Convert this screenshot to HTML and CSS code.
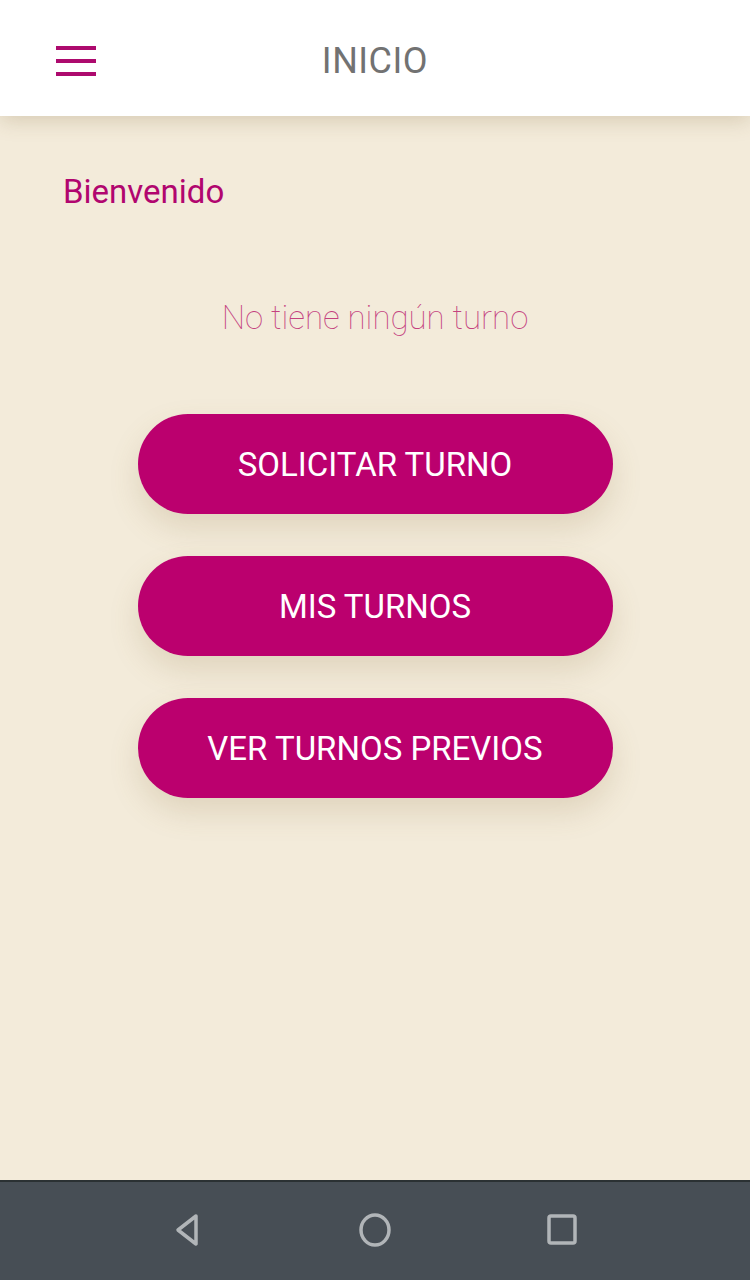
FILE: index.html
```html
<!DOCTYPE html>
<html lang="es">
<head>
    <meta charset="UTF-8">
    <meta name="viewport" content="width=device-width, initial-scale=1.0">
    <title>Inicio</title>
    <link rel="stylesheet" href="styles.css">
</head>
<body>
    <div class="screen">
        <header class="topbar">
            <button class="menu-btn" type="button" aria-label="Menu">
                <span></span><span></span><span></span>
            </button>
            <h1 class="title">INICIO</h1>
        </header>

        <main class="content">
            <p class="welcome">Bienvenido</p>
            <p class="empty">No tiene ningún turno</p>

            <div class="actions">
                <button class="pill" type="button">SOLICITAR TURNO</button>
                <button class="pill" type="button">MIS TURNOS</button>
                <button class="pill" type="button">VER TURNOS PREVIOS</button>
            </div>
        </main>

        <nav class="navbar">
            <svg class="nav-icon" width="40" height="40" viewBox="0 0 40 40">
                <path d="M28 5 L10 19 L28 33 Z" fill="none" stroke="#b1b5b8" stroke-width="3.5" stroke-linejoin="round"/>
            </svg>
            <svg class="nav-icon" width="40" height="40" viewBox="0 0 40 40">
                <ellipse cx="20" cy="19" rx="14" ry="15" fill="none" stroke="#b1b5b8" stroke-width="3.5"/>
            </svg>
            <svg class="nav-icon" width="40" height="40" viewBox="0 0 40 40">
                <rect x="7" y="5" width="26" height="27" rx="2" fill="none" stroke="#b1b5b8" stroke-width="3.5"/>
            </svg>
        </nav>
    </div>
</body>
</html>
```

FILE: styles.css
```css
html, body {
    margin: 0;
    padding: 0;
}
body {
    font-family: Roboto, "Liberation Sans", sans-serif;
    background-color: #f3ebda;
}
.screen {
    width: 750px;
    height: 1280px;
    display: flex;
    flex-direction: column;
    overflow: hidden;
}
.topbar {
    position: relative;
    z-index: 2;
    height: 116px;
    flex-shrink: 0;
    background: #fff;
    display: flex;
    align-items: center;
    justify-content: center;
    box-shadow: 0 4px 20px rgba(120, 95, 50, 0.24);
}
.menu-btn {
    position: absolute;
    left: 56px;
    top: 46px;
    width: 40px;
    height: 30px;
    padding: 0;
    border: none;
    background: none;
    display: flex;
    flex-direction: column;
    justify-content: space-between;
}
.menu-btn span {
    display: block;
    width: 40px;
    height: 4px;
    background-color: #ad0a6e;
}
.title {
    margin: 6px 0 0;
    font-size: 36px;
    font-weight: 400;
    color: #727272;
    letter-spacing: 0.5px;
}
.content {
    flex: 1;
    padding: 0 63px;
}
.welcome {
    margin: 57px 0 0;
    font-size: 33px;
    line-height: 38px;
    color: #b1066f;
}
.empty {
    margin: 87px 0 0;
    text-align: center;
    font-size: 33px;
    font-weight: 100;
    line-height: 40px;
    color: #c4427f;
}
.actions {
    margin-top: 76px;
    display: flex;
    flex-direction: column;
    align-items: center;
    gap: 42px;
}
.pill {
    width: 475px;
    height: 100px;
    border: none;
    border-radius: 50px;
    background-color: #bb006e;
    color: #fff;
    font-family: Roboto, "Liberation Sans", sans-serif;
    font-size: 33px;
    font-weight: 400;
    box-shadow: 0 14px 30px rgba(140, 110, 60, 0.18);
}
.navbar {
    height: 98px;
    flex-shrink: 0;
    background-color: #474e55;
    border-top: 2px solid #2b3133;
    display: flex;
    align-items: center;
    justify-content: center;
    gap: 147px;
}
.nav-icon {
    display: block;
}
```
